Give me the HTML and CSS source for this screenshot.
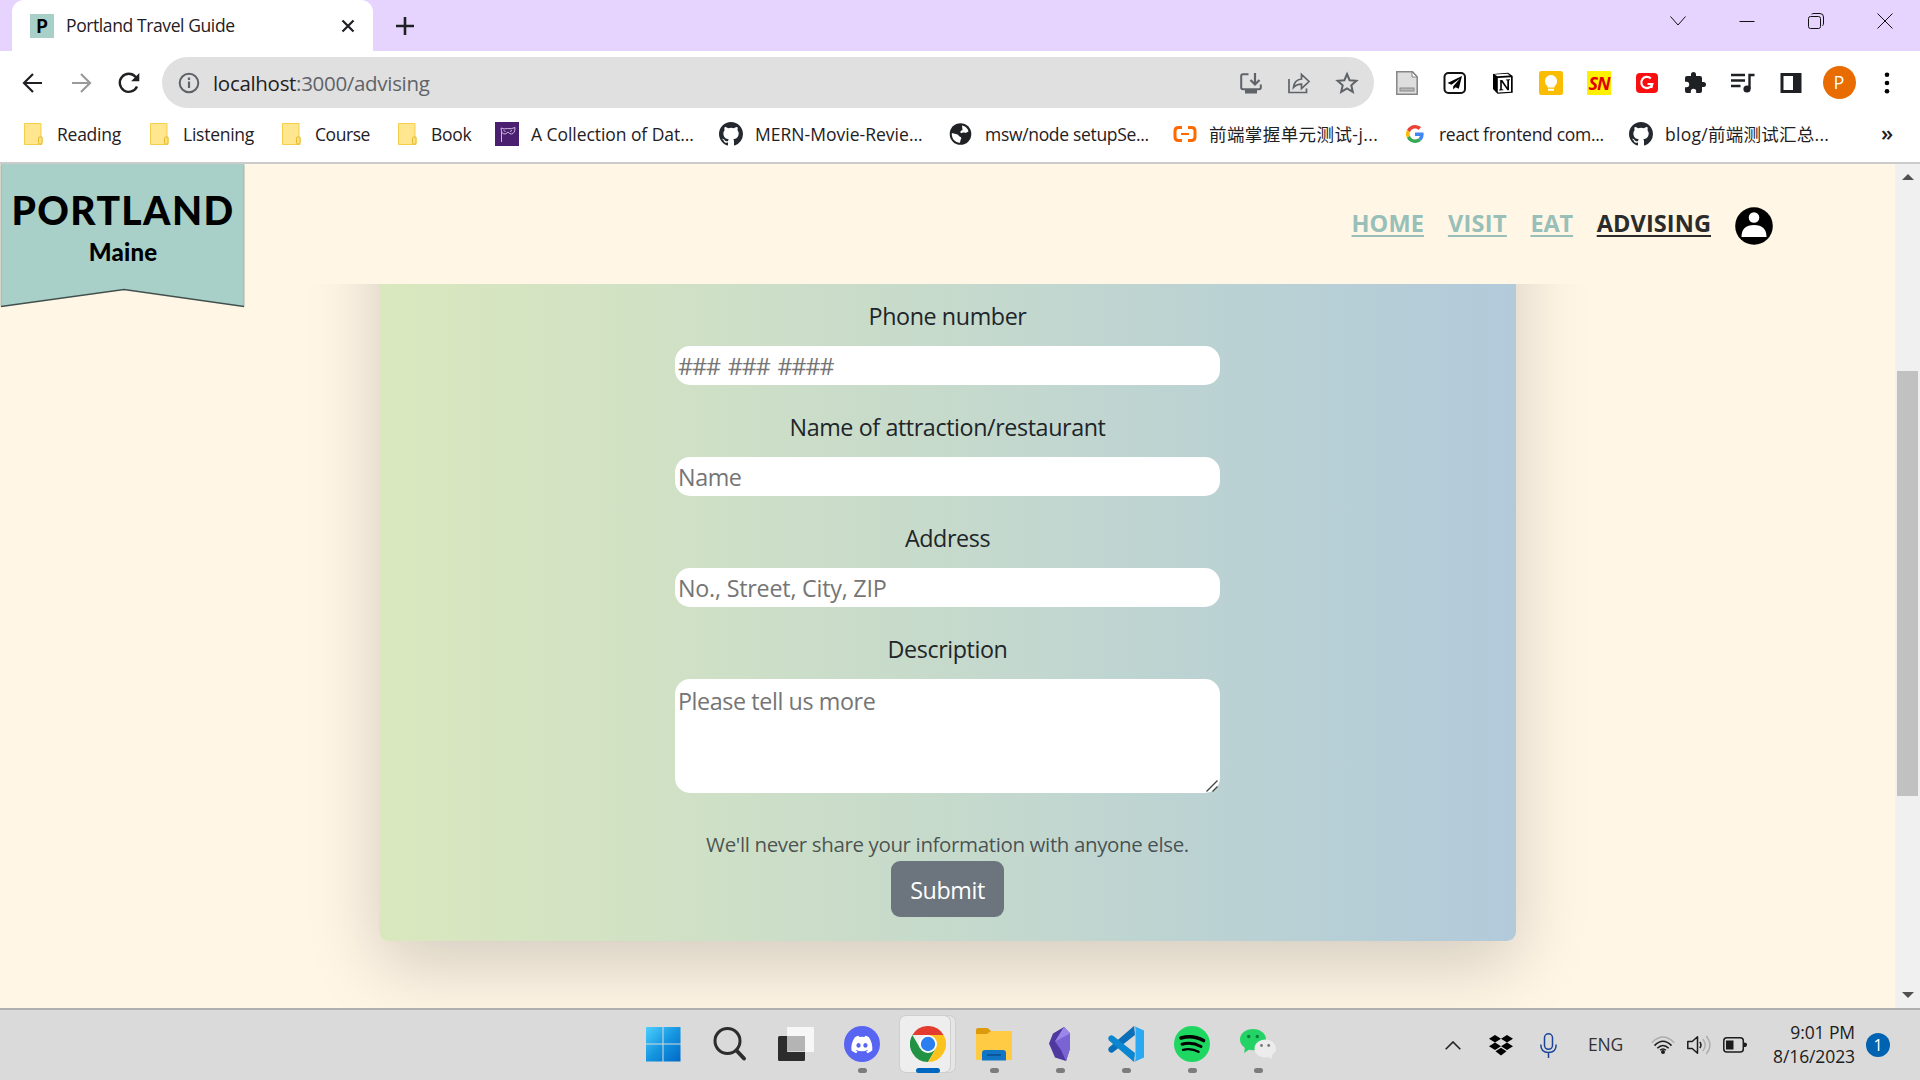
FILE: index.html
```html
<!DOCTYPE html>
<html lang="en">
<head>
<meta charset="utf-8">
<title>Portland Travel Guide</title>
<link rel="stylesheet" href="styles.css">
</head>
<body>
<svg class="defs" aria-hidden="true">
  <symbol id="folder" viewBox="0 0 24 24"><path d="M3.5 1.500h16.500v13.500h1v7.500H3.500z" fill="#ffe68f" stroke="#f5cf4b"/><rect x="17.500" y="15" width="3.500" height="7" rx="1.200" fill="#ffe27c" stroke="#e5ba30"/></symbol>
  <symbol id="github" viewBox="0 0 16 16"><path fill="#24292f" d="M8 0C3.580 0 0 3.580 0 8c0 3.540 2.290 6.530 5.470 7.590.4.070.55-.17.55-.38 0-.19-.01-.82-.01-1.490-2.010.37-2.530-.49-2.690-.94-.09-.23-.48-.94-.82-1.130-.28-.15-.68-.52-.01-.53.63-.01 1.080.58 1.230.82.72 1.210 1.870.87 2.330.66.070-.52.28-.87.51-1.070-1.780-.2-3.640-.89-3.640-3.950 0-.87.31-1.590.82-2.150-.08-.2-.36-1.020.08-2.120 0 0 .67-.21 2.200.82a7.600 7.600 0 0 1 4 0c1.530-1.040 2.200-.82 2.200-.82.44 1.100.16 1.920.08 2.120.51.56.82 1.270.82 2.150 0 3.070-1.870 3.750-3.650 3.950.29.25.54.73.54 1.480 0 1.070-.01 1.930-.01 2.200 0 .21.15.46.55.38A8 8 0 0 0 16 8c0-4.420-3.580-8-8-8z"/></symbol>
</svg>

<div class="tabstrip">
  <div class="tab">
    <span class="favicon">P</span>
    <span class="tab-title">Portland Travel Guide</span>
    <svg class="tab-close" viewBox="0 0 14 14"><path d="M1.500 1.500l11 11M12.500 1.500l-11 11" stroke="#1f2023" stroke-width="2.200"/></svg>
  </div>
  <svg class="new-tab" viewBox="0 0 18 18"><path d="M9 0v18M0 9h18" stroke="#1f2023" stroke-width="2.600"/></svg>
  <div class="window-controls">
    <svg viewBox="0 0 16 16"><path d="M.5 3.500L8 12l7.500-8.500" fill="none" stroke="#111"/></svg>
    <svg viewBox="0 0 16 16"><path d="M.5 8.500h15" stroke="#111"/></svg>
    <svg viewBox="0 0 16 16"><rect x=".5" y="3.500" width="12" height="12" rx="2" fill="none" stroke="#111"/><path d="M3.500 1.200Q4.500.5 6 .5h6q3.500 0 3.500 3.500v6q0 2-1 2.800" fill="none" stroke="#111"/></svg>
    <svg viewBox="0 0 16 16"><path d="M.5.5l15 15M15.500.5l-15 15" stroke="#111"/></svg>
  </div>
</div>

<div class="toolbar">
  <svg class="slot" viewBox="0 0 24 24"><path d="M21 12H4M12 3l-9 9 9 9" fill="none" stroke="#1f2023" stroke-width="2.200"/></svg>
  <svg class="slot" viewBox="0 0 24 24"><path d="M3 12h17M12 3l9 9-9 9" fill="none" stroke="#9a9a9a" stroke-width="2.200"/></svg>
  <svg class="slot" viewBox="0 0 24 24"><path d="M20 15.500A9 9 0 1 1 18.500 5.800L21 9" fill="none" stroke="#1f2023" stroke-width="2.400"/><path d="M22.300 2v8.200h-8.200z" fill="#1f2023"/></svg>
  <div class="omnibox">
    <svg class="info" viewBox="0 0 22 22"><circle cx="11" cy="11" r="9.300" fill="none" stroke="#5f6368" stroke-width="2"/><path d="M11 9.500v6.500M11 5.500v2.400" stroke="#5f6368" stroke-width="2.200"/></svg>
    <div class="url">localhost<span>:3000/advising</span></div>
    <svg class="slot" viewBox="0 0 24 24"><path d="M9.500 3.200H4q-1.800 0-1.800 1.800v11.500q0 1.800 1.800 1.800h16q1.800 0 1.800-1.800v-3" fill="none" stroke="#5f6368" stroke-width="2"/><path d="M6 18h12v4.500H6z" fill="#5f6368"/><path d="M16 2v11M11.500 9l4.500 4.500L20.500 9" fill="none" stroke="#5f6368" stroke-width="2.200"/></svg>
    <svg class="slot" viewBox="0 0 24 24"><path d="M2 8v13.500h17.500v-4M6.500 16.500c.5-5 3-8 8-8.500V3.500l7.500 7-7.500 7v-4.300c-3.500 0-6 1-8 3.300z" fill="none" stroke="#5f6368" stroke-width="1.700"/></svg>
    <svg class="slot" viewBox="0 0 24 24"><path d="M12 3l2.600 6.200 6.800.6-5.100 4.500 1.500 6.600L12 17.400l-5.800 3.500 1.500-6.600-5.100-4.500 6.800-.6z" fill="none" stroke="#5f6368" stroke-width="2"/></svg>
  </div>
  <div class="extensions">
    <svg class="slot" viewBox="0 0 24 24"><path d="M1.800.8h15.700l4.700 5v17.400H1.800z" fill="#dedede" stroke="#858585" stroke-width="1.500"/><path d="M17 1v5h5z" fill="#fff" stroke="#858585"/><rect x="5" y="17" width="14" height="3" fill="#b9b9b9" stroke="#888"/></svg>
    <svg class="slot" viewBox="0 0 24 24"><rect x="1.500" y="2" width="20.500" height="20" rx="4" fill="#fff" stroke="#111" stroke-width="2"/><path d="M19 5L4.500 12l4 1.800L17 7.500l-6.800 7.800v3.200l2.300-2.200 3.300 1.500z" fill="#000"/></svg>
    <svg class="slot" viewBox="0 0 24 24"><path d="M2 3l15-1.200 4.700 3.300v16.600L6.500 22.700 2 18z" fill="#000"/><path d="M3.500 3.500l13-.8 2.400 1.700-12.500.8zM6.800 7l13.200-.8v14.500l-13.200.8z" fill="#fff"/><path d="M8.700 9.200l2.600-.2 5 7.400V9.500l-1.300-.2v-.8l4-.2v.8l-1 .3v9.800h-1.600l-5.600-8v7l1.500.3v.7l-4.200.2v-.7l1.100-.4v-8.100z" fill="#000"/></svg>
    <svg class="slot" viewBox="0 0 24 24"><rect width="24" height="24" rx="2.500" fill="#fbbc04"/><path d="M12 4a6.200 6.200 0 0 0-3.500 11.200v1.300h7v-1.300A6.200 6.200 0 0 0 12 4zM9 17.700h6v2H9z" fill="#fff"/></svg>
    <span class="slot"><b class="sn">SN</b></span>
    <svg class="slot" viewBox="0 0 24 24"><rect x="1" y="2" width="22" height="20" rx="4" fill="#f90f0f"/><path d="M15.800 7.500A5.600 5.600 0 1 0 17.300 13H12.500M17.300 13l-1 4" fill="none" stroke="#fff" stroke-width="2.200"/></svg>
    <svg class="slot" viewBox="0 0 24 24"><path d="M20.500 11H19V7a2 2 0 0 0-2-2h-4V3.500a2.500 2.500 0 0 0-5 0V5H4a2 2 0 0 0-2 2v3.800h1.500a2.700 2.700 0 0 1 0 5.400H2V20a2 2 0 0 0 2 2h3.800v-1.500a2.700 2.700 0 0 1 5.400 0V22H17a2 2 0 0 0 2-2v-4h1.500a2.500 2.500 0 0 0 0-5z" fill="#1f2023"/></svg>
    <svg class="slot" viewBox="0 0 24 24"><path d="M0 4h14M0 9.500h14M0 15h9.500M18.500 18V4h5" fill="none" stroke="#1f2023" stroke-width="2.400"/><circle cx="16" cy="18" r="3.600" fill="#1f2023"/></svg>
    <svg class="slot" viewBox="0 0 24 24"><path d="M1.500 2h21v20h-21zM4.500 5v14h9.500V5z" fill="#1f2023" fill-rule="evenodd"/></svg>
    <span class="slot"><b class="profile">P</b></span>
    <svg class="slot" viewBox="0 0 24 24"><circle cx="12" cy="3.800" r="2.300"/><circle cx="12" cy="12" r="2.300"/><circle cx="12" cy="20.200" r="2.300"/></svg>
  </div>
</div>

<div class="bookmarks">
  <div class="bm"><svg><use href="#folder"/></svg><span>Reading</span></div>
  <div class="bm"><svg><use href="#folder"/></svg><span>Listening</span></div>
  <div class="bm"><svg><use href="#folder"/></svg><span>Course</span></div>
  <div class="bm"><svg><use href="#folder"/></svg><span>Book</span></div>
  <div class="bm"><svg viewBox="0 0 24 24"><path fill="#4b1f6f" d="M0 0h24v24H0z"/><path d="M6 6q3 1.500 6.500.5Q16 7.500 20 5.500q0 6-3.500 6.500-2 0-3.500-2-2 2.500-4.500 2Q6 11 6 6zM6.500 10v10M8.500 8.500l2 1M15 9.500l2-1" fill="none" stroke="#cdb6e0" stroke-width="1"/></svg><span>A Collection of Dat...</span></div>
  <div class="bm"><svg><use href="#github"/></svg><span>MERN-Movie-Revie...</span></div>
  <div class="bm"><svg viewBox="0 0 24 24"><circle cx="11.500" cy="12" r="10.800" fill="#202124"/><path d="M13 3.500c3 .5 6 3 6.500 6l-3 1.500c-1.500-1-3.500-.3-4 .3-1 0-1.700-1.600-.5-2.600l1.500-.6zM2.800 11l5 1.200c2 .4 1.700 2 3.400 2.500 1.600.6 1.300 2.400.4 3l-.6 3C6 20.500 2.500 17 2.800 11z" fill="#fff"/></svg><span>msw/node setupSe...</span></div>
  <div class="bm"><svg viewBox="0 0 24 24"><path d="M9 5.500H5.500Q2 5.500 2 9v6q0 3.500 3.500 3.500H9M15 5.500h3.500Q22 5.500 22 9v6q0 3.500-3.500 3.500H15" fill="none" stroke="#ff6a00" stroke-width="3"/><path d="M8 12h8" stroke="#ff6a00" stroke-width="2"/></svg><span>前端掌握单元测试-j...</span></div>
  <div class="bm"><svg viewBox="-8 -8 64 64"><path fill="#ea4335" d="M24 9.500c3.540 0 6.710 1.220 9.210 3.600l6.850-6.850C35.900 2.380 30.470 0 24 0 14.620 0 6.510 5.380 2.560 13.220l7.980 6.190C12.430 13.720 17.740 9.500 24 9.500z"/><path fill="#4285f4" d="M46.980 24.550c0-1.570-.15-3.090-.38-4.550H24v9.020h12.940c-.58 2.960-2.260 5.480-4.780 7.180l7.730 6c4.510-4.180 7.090-10.360 7.090-17.650z"/><path fill="#fbbc05" d="M10.530 28.590a14.500 14.500 0 0 1 0-9.180l-7.980-6.190a24 24 0 0 0 0 21.560z"/><path fill="#34a853" d="M24 48c6.480 0 11.930-2.130 15.890-5.810l-7.730-6c-2.150 1.450-4.920 2.300-8.160 2.300-6.260 0-11.570-4.220-13.470-9.910l-7.980 6.190C6.510 42.620 14.620 48 24 48z"/></svg><span>react frontend com...</span></div>
  <div class="bm"><svg><use href="#github"/></svg><span>blog/前端测试汇总...</span></div>
  <div class="overflow">»</div>
</div>

<div class="viewport">
  <div class="page">
    <header class="site-header">
      <a class="logo">
        <svg class="banner" viewBox="0 0 246 145" aria-hidden="true"><path d="M1 0h243v142.500L124 125.500 1 142.500z" fill="#a8d0c8"/><path d="M1 .5v142M244 .5v142" stroke="#a9b3a8" stroke-width="1"/><path d="M1 142.500l123-17 120 17" fill="none" stroke="#42504d" stroke-width="1.500"/></svg>
        <span class="city">PORTLAND</span>
        <span class="state">Maine</span>
      </a>
      <nav>
        <a class="n1">HOME</a><a class="n2">VISIT</a><a class="n3">EAT</a><a class="n4 active">ADVISING</a>
        <svg class="avatar" viewBox="0 0 38 38"><circle cx="19" cy="19" r="18.800"/><circle cx="19" cy="10.500" r="5.300" fill="#fff"/><path d="M6.500 30q0-12 12.500-12t12.500 12z" fill="#fff"/></svg>
      </nav>
    </header>
    <form class="card">
      <label>Phone number</label>
      <input class="phone" placeholder="### ### ####">
      <label>Name of attraction/restaurant</label>
      <input placeholder="Name">
      <label>Address</label>
      <input class="address" placeholder="No., Street, City, ZIP">
      <label>Description</label>
      <div class="description">
        <textarea placeholder="Please tell us more"></textarea>
        <svg class="grip" viewBox="0 0 14 14"><path d="M1.500 12.500L12.500 1.500M7.500 12.500l5-5" stroke="#444" stroke-width="1.400"/></svg>
      </div>
      <small>We'll never share your information with anyone else.</small>
      <button type="button">Submit</button>
    </form>
  </div>
  <div class="scrollbar">
    <svg viewBox="0 0 12 6"><path d="M6 0l6 6H0z" fill="#505050"/></svg>
    <div class="thumb"></div>
    <svg viewBox="0 0 12 6"><path d="M0 0h12L6 6z" fill="#505050"/></svg>
  </div>
</div>

<div class="taskbar">
  <div class="apps">
    <div class="app"><svg viewBox="1 0 36 36"><defs><linearGradient id="win" x2="1" y2="1"><stop stop-color="#4fd0ff"/><stop offset=".5" stop-color="#1596e0"/><stop offset="1" stop-color="#0069c8"/></linearGradient></defs><path d="M1 1h16.500v16.500H.5V1.500zM18.500 1h17v16.500h-17zM.5 18.500h17v17H.5zM18.500 18.500h17v17h-17z" fill="url(#win)"/></svg></div>
    <div class="app"><svg viewBox="0 0 36 36"><circle cx="15.500" cy="15" r="12.500" fill="none" stroke="#2d2d2d" stroke-width="3"/><path d="M24.500 24.500l7.500 8" stroke="#2d2d2d" stroke-width="4" stroke-linecap="round"/></svg></div>
    <div class="app"><svg viewBox="0 0 36 36"><rect x="0" y="10" width="27" height="25" rx="1.500" fill="#2c2c2c"/><rect x="9" y="1" width="27" height="25" rx="1" fill="#f7f7f7"/><path d="M9 10h18v15.500H9z" fill="#b4b4b4"/></svg></div>
    <div class="app running"><svg viewBox="0 0 36 36"><circle cx="18" cy="18" r="18" fill="#5865f2"/><path transform="translate(8.300 7) scale(.96)" fill="#fff" d="M17.300 4.400A19.800 19.800 0 0 0 13.400 2.900l-.7 1.300a18.300 18.300 0 0 0-5.400 0L6.600 2.900a19.700 19.700 0 0 0-3.900 1.500C-.5 9-1.300 13.600-.9 18.100a20 20 0 0 0 5 3l1.300-2-2-1 .5-.4c3.900 1.800 8.200 1.800 12.100 0l.5.400-2 1 1.300 2a19.900 19.900 0 0 0 5-3c.5-5.200-.8-9.700-3.500-13.700zM6.500 15.300c-1.200 0-2.200-1.100-2.200-2.400s1-2.400 2.200-2.400 2.200 1.100 2.200 2.400-1 2.400-2.200 2.400zm7.200 0c-1.200 0-2.200-1.100-2.200-2.400s1-2.400 2.200-2.400 2.200 1.100 2.200 2.400-1 2.400-2.200 2.400z"/></svg></div>
    <div class="app running current"><svg viewBox="0 0 36 36"><path d="M2.400 9A18 18 0 0 1 33.600 9H18z" fill="#e33b2e"/><path d="M2.400 9A18 18 0 0 0 18 36l7.800-13.500L10.200 22.500z" fill="#229342"/><path d="M33.600 9A18 18 0 0 1 18 36l7.800-13.500L18 9z" fill="#fcc31e"/><circle cx="18" cy="18" r="9" fill="#fff"/><circle cx="18" cy="18" r="7.200" fill="#2b7ff0"/></svg></div>
    <div class="app running"><svg viewBox="0 0 36 36"><path d="M0 4q0-2 2-2h9.500l3.500 3v5H0z" fill="#dd9b0b"/><path d="M0 8h11l4-3h20q1 0 1 1v27q0 1-1 1H1q-1 0-1-1z" fill="#ffcb45"/><path d="M6 34.500V27q0-3 3-3h18q3 0 3 3v7.500z" fill="#0f75c4"/><path d="M11 29h14" stroke="#0a4c8b" stroke-width="1.500"/></svg></div>
    <div class="app running"><svg viewBox="0 0 36 36"><path d="M22 1l6 6.500v15l-4 12.500-11-3.500-6-14 4-10z" fill="#4f38a0"/><path d="M22 1l6 6.500v15l-4 12.500-5-11-6-8.500z" fill="#7b63d4"/><path d="M22 1l6 6.500L13 15.500z" fill="#9b87ea"/></svg></div>
    <div class="app running"><svg viewBox="0 0 36 36"><path d="M26 0L1 21.500q-1.500 2 0 4 2 2 4 .7L27 9z" fill="#0a6fb8"/><path d="M26 36L1 14.500q-1.500-2 0-4Q3 8.500 5 9.800L27 27z" fill="#0b86d0"/><path d="M26 0l10 4.500v27L26 36q1.500-1 1.500-3V3Q27.500 1 26 0z" fill="#29a9f2"/></svg></div>
    <div class="app running"><svg viewBox="0 0 36 36"><circle cx="18" cy="18" r="18" fill="#1ed760"/><path d="M7 12q12-3.500 22.500 2.500" fill="none" stroke="#000" stroke-width="3.600" stroke-linecap="round"/><path d="M8 18.200q10-2.700 19 2.300" fill="none" stroke="#000" stroke-width="3" stroke-linecap="round"/><path d="M9 23.800q8.500-2 15.500 2" fill="none" stroke="#000" stroke-width="2.400" stroke-linecap="round"/></svg></div>
    <div class="app running"><svg viewBox="0 0 36 36"><path d="M13 3C5.800 3 0 7.500 0 13.500c0 3.300 1.800 6.200 4.800 8.200L4.200 27l4.500-3.300c1.300.3 2.800.5 4.300.5 7.200 0 13-4.700 13-10.700S20.200 3 13 3z" fill="#23d366"/><path d="M25.300 13.500c-6 0-10.800 4-10.800 9s4.800 9 10.800 9c1.200 0 2.400-.2 3.500-.5l3.500 2-.6-3.800c2.600-1.600 4.300-4 4.300-6.700 0-5-4.700-9-10.700-9z" fill="#ececec"/><g fill="#0b7a3a"><circle cx="8.700" cy="10.500" r="1.700"/><circle cx="17.300" cy="10.500" r="1.700"/></g><g fill="#777"><circle cx="21.500" cy="19.500" r="1.400"/><circle cx="28.700" cy="19.500" r="1.400"/></g></svg></div>
  </div>
  <div class="tray">
    <svg class="chev" viewBox="0 0 16 9"><path d="M.7 8.300L8 1l7.300 7.300" fill="none" stroke="#222" stroke-width="1.600"/></svg>
    <svg class="dropbox" viewBox="0 0 24 21"><path d="M6 0l6 3.700-6 3.700L0 3.700zM18 0l6 3.700-6 3.700-6-3.700zM6 7.500l6 3.700-6 3.700-6-3.700zM18 7.500l6 3.700-6 3.700-6-3.700zM12 12.700l5.500 3.600L12 20.500l-5.500-4.200z"/></svg>
    <svg class="mic" viewBox="0 0 17 25"><rect x="4.500" y=".8" width="8" height="15.500" rx="4" fill="none" stroke="#1b4697" stroke-width="1.500"/><path d="M.8 11.500q0 8 7.700 8t7.700-8M8.500 19.500V25" fill="none" stroke="#1b4697" stroke-width="1.500"/></svg>
    <span class="lang">ENG</span>
    <svg class="wifi" viewBox="0 0 24 18"><path d="M.8 6.800q11.200-11.500 22.400 0" fill="none" stroke="#adadad" stroke-width="1.400"/><path d="M3.500 9.600q8.500-8.700 17 0M6.300 12.300q5.700-5.700 11.400 0" fill="none" stroke="#1c1c1c" stroke-width="1.600"/><path d="M9 14.300q3-2.800 6 0" fill="none" stroke="#1c1c1c" stroke-width="1.400"/><circle cx="12" cy="15.900" r="2" fill="#1c1c1c"/></svg>
    <svg class="sound" viewBox="0 0 24 20"><path d="M.8 6.500h4.400l5.300-4.700v16.400l-5.300-4.700H.8z" fill="none" stroke="#1c1c1c" stroke-width="1.500" stroke-linejoin="round"/><path d="M12.800 7q2.400 3 0 6" fill="none" stroke="#1c1c1c" stroke-width="1.500"/><path d="M15.800 4q4.800 6 0 12M19.200 1q7.400 9 0 18" fill="none" stroke="#adadad" stroke-width="1.400"/></svg>
    <svg class="battery" viewBox="0 0 24 16"><rect x=".8" y=".8" width="19.500" height="14.200" rx="3" fill="none" stroke="#1c1c1c" stroke-width="1.500"/><path d="M3 3.500h7.500v9H3zM21 5.500q3 0 3 2.300t-3 2.300z" fill="#1c1c1c"/></svg>
    <div class="clock"><div>9:01 PM</div><div>8/16/2023</div></div>
    <span class="count">1</span>
  </div>
</div>
</body>
</html>
```
FILE: styles.css
```css
* { box-sizing: border-box; }
body {
  margin: 0; width: 1920px; height: 1080px; overflow: hidden;
  display: flex; flex-direction: column;
  font-family: "Open Sans", "Noto Sans CJK SC", sans-serif; color: #1f2023;
}
svg { display: block; flex: none; }
.defs { position: absolute; width: 0; height: 0; }

.tabstrip { height: 51px; flex: none; display: flex; align-items: center; padding-left: 12px; background: #e6d4ff; }
.tab { width: 361px; height: 51px; display: flex; align-items: center; padding: 0 18px; background: #fff; border-radius: 12px 12px 0 0; }
.favicon { width: 24px; height: 24px; background: #a8d0c8; font: 900 18px/24px Lato, sans-serif; text-align: center; color: #000; }
.tab-title { margin: -2px 0 0 12px; font-size: 17.500px; letter-spacing: -.4px; white-space: nowrap; }
.tab-close { width: 14px; height: 14px; margin-left: auto; }
.new-tab { width: 18px; height: 18px; margin-left: 23px; }
.window-controls { display: flex; gap: 53px; margin: -9px 27px 0 auto; }
.window-controls svg { width: 16px; height: 16px; }

.toolbar { height: 63px; flex: none; display: flex; align-items: center; padding-left: 9px; background: #fff; }
.slot { width: 48px; height: 24px; flex: none; display: flex; align-items: center; justify-content: center; }
.omnibox { width: 1212px; height: 51px; margin-left: 9px; padding: 0 3px 0 16px; display: flex; align-items: center; background: #e0e0e0; border-radius: 26px; }
.info { width: 22px; height: 22px; }
.url { flex: 1; margin-left: 13px; font-size: 20.500px; line-height: 30px; letter-spacing: -.31px; white-space: nowrap; }
.url span { color: #5f6368; }
.extensions { display: flex; align-items: center; margin-left: 9px; }
.sn { width: 24px; height: 24px; background: #ffef00; color: #e00000; font: italic bold 18px/25px "Open Sans", sans-serif; text-align: center; letter-spacing: -1px; }
.profile { width: 33px; height: 33px; flex: none; border-radius: 50%; background: #e86c00; color: #fff; font: 18px/33px "Open Sans", sans-serif; text-align: center; }

.bookmarks {
  height: 50px; flex: none; padding: 0 0 8px 21px; display: grid; align-items: center;
  grid-template-columns: 126px 132px 116px 100px 224px 230px 224px 230px 226px 252px 1fr;
  background: #fff; border-bottom: 2px solid #cbcbcb; font-size: 17.500px; line-height: 24px; letter-spacing: -.25px;
}
.bm { display: flex; align-items: center; gap: 12px; white-space: nowrap; }
.bm svg { width: 24px; height: 24px; }
.bm:nth-child(3) { letter-spacing: -.45px; }
.bm:nth-child(5) { letter-spacing: -.06px; }
.bm:nth-child(6) { letter-spacing: .02px; }
.bm:nth-child(7) { letter-spacing: -.32px; }
.bm:nth-child(8) { letter-spacing: .42px; }
.bm:nth-child(9) { letter-spacing: -.3px; }
.bm:nth-child(10) { letter-spacing: .27px; }
.overflow { font-size: 22px; font-weight: 600; line-height: 22px; margin-top: -4px; }

.viewport { height: 844px; flex: none; display: flex; background: #fff6e6; }
.page { width: 1895px; overflow: hidden; }
.site-header { position: relative; z-index: 1; height: 120px; display: flex; justify-content: space-between; background: #fff6e6; }
.logo { position: relative; width: 246px; display: flex; flex-direction: column; align-items: center; color: #000; font-family: Lato, sans-serif; font-weight: 700; }
.banner { position: absolute; left: 0; top: 0; width: 246px; height: 145px; z-index: -1; }
.city { font-size: 39px; line-height: 44px; margin-top: 24px; letter-spacing: 2.300px; font-weight: 900; letter-spacing: 1.400px; }
.state { font-size: 24px; line-height: 30px; margin-top: 5px; letter-spacing: .2px; font-weight: 900; }
nav { display: flex; align-items: center; gap: 24px; padding-right: 122px; }
nav a { font-weight: 700; font-size: 23.500px; line-height: 36px; margin-top: -2px; color: #98bfb8; white-space: nowrap; text-decoration: underline; text-decoration-thickness: 2px; text-underline-offset: 3px; }
nav a.active { color: #2b2b2b; }
.n1 { width: 72.400px; letter-spacing: .1px; }
.n2 { width: 58.500px; letter-spacing: .3px; }
.n3 { width: 42.300px; letter-spacing: -.1px; }
.n4 { width: 114.300px; letter-spacing: .1px; }
.avatar { width: 38px; height: 38px; margin-top: 3px; }

.card {
  width: 1137px; height: 857px; margin: -200px auto 0; padding: 214px 296px 24px;
  display: flex; flex-direction: column; align-items: center; border-radius: 9px;
  background: linear-gradient(to right, #dae8be, #c6daccff 50%, #bad1d4 76%, #b2cada);
  box-shadow: 0 24px 72px rgba(0, 0, 0, .175);
  color: #212529; font-size: 23.300px; letter-spacing: -.4px;
}
.card label { height: 37px; line-height: 37px; margin-bottom: 11px; white-space: nowrap; }
.card input, .card textarea { width: 545px; flex: none; border: 0; border-radius: 15px; background: #fff; font: inherit; letter-spacing: inherit; }
.card input { height: 39px; margin-bottom: 24px; padding: 1px 3px; }
.phone { word-spacing: 2.500px; }
.card input.phone { letter-spacing: -1px; }
.card input.address { letter-spacing: -.22px; }
.description { position: relative; height: 114px; margin-bottom: 35px; }
.card textarea { display: block; height: 114px; padding: 4px 3px; line-height: 37px; resize: none; }
.grip { position: absolute; right: 1px; bottom: 0; width: 14px; height: 14px; }
.card ::placeholder { color: #757575; }
.card small { font-size: 20.500px; line-height: 33px; height: 33px; margin-bottom: 0; letter-spacing: -.37px; color: #212529bf; white-space: nowrap; }
.card button { width: 113px; height: 56px; flex: none; padding: 2px 0 0; border: 0; border-radius: 9px; background: #6c757d; color: #fff; font: inherit; letter-spacing: -.4px; }

.scrollbar { width: 25px; background: #f0f0f0; display: flex; flex-direction: column; align-items: center; padding: 10px 0; }
.scrollbar svg { width: 12px; height: 6px; }
.thumb { width: 21px; height: 425px; margin: 191px 0 auto; background: #c1c1c1; }

.taskbar { height: 72px; flex: none; display: flex; border-top: 2px solid #b0b0b0; background: #dadada; }
.apps { display: flex; margin-left: 631px; }
.app { position: relative; width: 66px; height: 70px; display: flex; justify-content: center; padding-top: 16px; }
.app svg { position: relative; width: 36px; height: 36px; }
.running::after { content: ""; position: absolute; left: 28.500px; top: 58px; width: 9px; height: 5px; border-radius: 3px; background: #7c7c7c; }
.current::before { content: ""; position: absolute; left: 5px; top: 6px; width: 50px; height: 56px; border-radius: 6px; background: #eee; box-shadow: 0 0 0 1px #cfcfcf, 5px 0 0 0 #e6e6e6, 5px 0 0 1px #cfcfcf; }
.current::after { left: 21px; width: 24px; background: #0067c0; }
.tray { display: flex; align-items: center; margin-left: auto; padding-right: 30px; font-size: 17.500px; color: #1c1c1c; }
.tray span, .clock { white-space: nowrap; }
.chev { width: 16px; height: 9px; }
.dropbox { width: 24px; height: 21px; margin-left: 28px; }
.mic { width: 17px; height: 25px; margin-left: 27px; }
.lang { width: 34px; margin: -2px 0 0 31px; letter-spacing: -.2px; color: #333; }
.wifi { width: 24px; height: 18px; margin-left: 29px; }
.sound { width: 24px; height: 20px; margin-left: 12px; }
.battery { width: 24px; height: 16px; margin-left: 12px; }
.clock { width: 108px; text-align: right; line-height: 24px; margin-top: -3px; letter-spacing: -.1px; }
.count { width: 24px; height: 24px; margin-left: 11px; border-radius: 50%; background: #0063b1; color: #fff; font-size: 16px; line-height: 24px; text-align: center; }
```
